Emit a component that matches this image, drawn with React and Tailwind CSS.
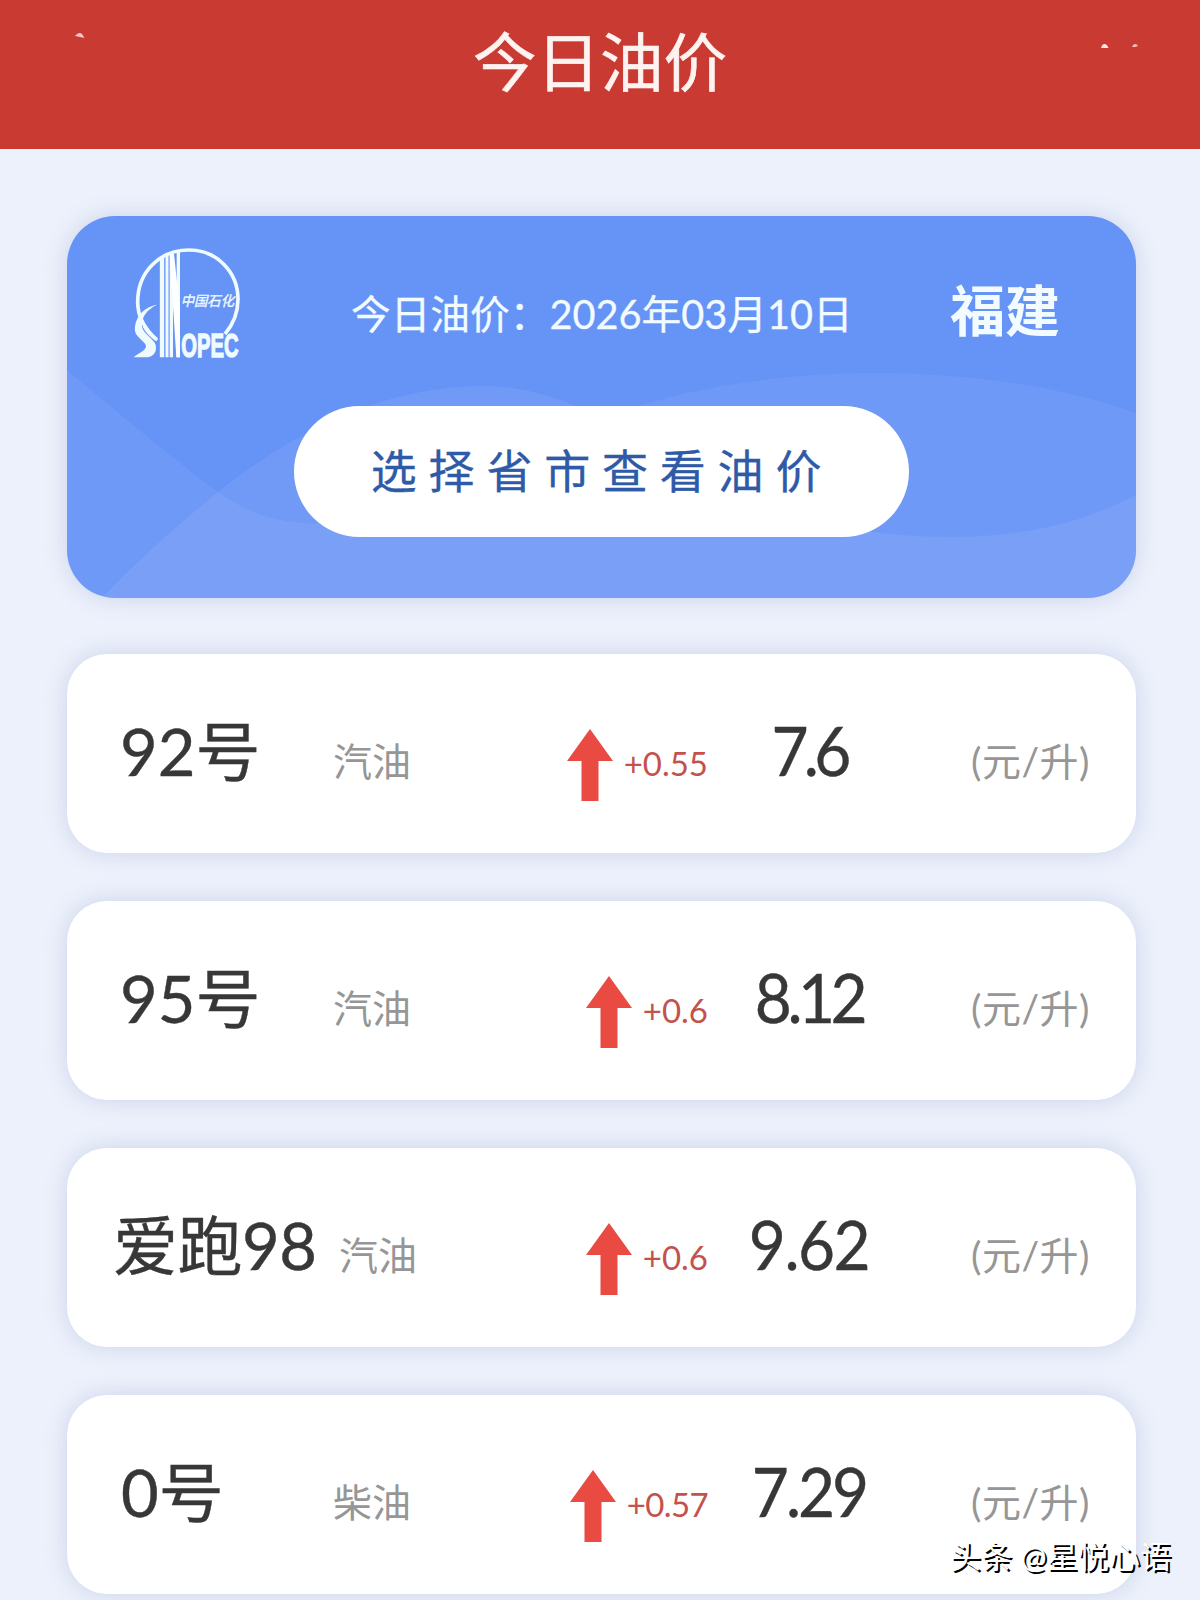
const prices = [
  { name: '92号', type: '汽油', change: '+0.55', price: '7.6', pad: 'pl-[53px]', nameStyle: 'w-[213px]', priceStyle: 'tracking-[-5px]' },
  { name: '95号', type: '汽油', change: '+0.6', price: '8.12', pad: 'pl-[53px]', nameStyle: 'w-[213px]', priceStyle: 'tracking-[-4.8px]' },
  { name: '爱跑98', type: '汽油', change: '+0.6', price: '9.62', pad: 'pl-[46px]', nameStyle: 'w-[226px] tracking-[-0.5px]', priceStyle: 'tracking-[-1.6px]' },
  { name: '0号', type: '柴油', change: '+0.57', price: '7.29', pad: 'pl-[54px]', nameStyle: 'w-[212px]', priceStyle: 'tracking-[-3.2px]', changeStyle: 'tracking-[-0.6px]' },
];

const SinopecLogo = () => (
  <svg className="w-[108px] h-[120px] shrink-0 overflow-visible" viewBox="70 51 324 360" fill="none">
    {/* Ring */}
    <path d="M140 328C104 296 84 262 84 216C84 126 150 60 238 60C322 60 385 126 385 208C385 252 370 284 346 312" stroke="#f0fbff" strokeWidth="11" />
    {/* Swoosh */}
    <path d="M142 224C98 232 74 266 76 302C78 322 108 334 109 348C109 362 90 366 72 382H114C134 378 142 364 138 344C134 328 100 310 97 290C95 262 110 240 142 224Z" fill="#f0fbff" />
    <path d="M103 288C112 306 124 318 143 330" stroke="#f0fbff" strokeWidth="9" />
    {/* Derrick bars */}
    <path d="M157 84V382" stroke="#f0fbff" strokeWidth="13" />
    <path d="M172 76V382" stroke="#f0fbff" strokeWidth="9" />
    <path d="M185 70V382M206 66V382" stroke="#f0fbff" strokeWidth="10" />
    <path d="M180 72H193L211 240V382H200Z" fill="#fff" />
    <text x="213" y="227" textLength="160" lengthAdjust="spacingAndGlyphs" fill="#f0fbff" stroke="#f0fbff" strokeWidth="1" fontSize="42" fontStyle="italic" fontFamily="Noto Sans CJK SC, sans-serif">中国石化</text>
    <text x="215" y="380" textLength="172" lengthAdjust="spacingAndGlyphs" fill="#f0fbff" stroke="#f0fbff" strokeWidth="4" fontSize="102" fontWeight="700" fontFamily="Liberation Sans Narrow, Liberation Sans, sans-serif">OPEC</text>
  </svg>
);

const UpArrow = () => (
  <svg className="w-[46px] h-[72px] shrink-0" viewBox="0 0 46 72">
    <path d="M23 0L46 32H31.5V72H14.5V32H0Z" fill="#e94b43" />
  </svg>
);

const PriceRow = ({ item }) => (
  <div className={`flex items-baseline h-[199px] pt-[51px] rounded-[40px] bg-white shadow-[0_0_22px_rgba(100,125,175,0.25)] text-[#373737] ${item.pad}`}>
    <div className={`shrink-0 text-[65px] leading-[90px] whitespace-nowrap [-webkit-text-stroke:0.4px_#373737] ${item.nameStyle}`}>{item.name}</div>
    <div className="text-[39px] text-[#969696]">{item.type}</div>
    <div className="ml-auto self-start mt-[24px]">
      <UpArrow />
    </div>
    <div className={`ml-[11px] text-[33px] text-[#c4524c] ${item.changeStyle || ''}`}>{item.change}</div>
    <div className={`ml-[21px] w-[160px] text-center text-[68px] leading-[90px] whitespace-nowrap scale-x-[0.94] [-webkit-text-stroke:0.4px_#373737] ${item.priceStyle}`}>
      {item.price}
    </div>
    <div className="ml-[82px] w-[165px] text-[39px] tracking-[0.5px] text-[#969696] whitespace-nowrap">(元/升)</div>
  </div>
);

const App = () => {
  return (
    <div className="relative w-[1200px] h-[1600px] overflow-hidden bg-[#edf1fc] font-['Lato','Noto_Sans_CJK_SC',sans-serif]">
      {/* Title bar */}
      <header className="relative h-[149px] bg-[#c93a32] flex justify-center">
        <h1 className="pt-[14px] text-[63.5px] leading-[96px] text-[#fff3f1] [-webkit-text-stroke:0.6px_#fff3f1]">今日油价</h1>
        <svg className="absolute left-[74px] top-[31px] w-[12px] h-[8px]" viewBox="0 0 12 8">
          <path d="M1 5Q5 0 8 3L10.500 7L6 6Z" fill="#f6c9c5" />
        </svg>
        <svg className="absolute left-[1100px] top-[42px] w-[40px] h-[8px]" viewBox="0 0 40 8">
          <path d="M1 6Q2 2 4.500 2Q7 2 8.500 6Z" fill="#fde4e2" />
          <path d="M32 5Q33 2 35 2Q37 2 38 4L35 5Z" fill="#f3bcb7" />
        </svg>
      </header>

      <main className="pl-[67px] pr-[64px] pt-[67px]">
        {/* Province card */}
        <section className="relative h-[382px] rounded-[48px] overflow-hidden bg-[#6693f6] shadow-[0_0_22px_rgba(100,125,175,0.25)]">
          <svg className="absolute inset-0 w-full h-full" viewBox="0 0 1069 382" preserveAspectRatio="none">
            <path d="M0 154C55 200 105 242 151 276C185 300 215 308 260 308C400 308 480 157 812 157C915 157 1010 175 1069 197V382H0Z" fill="#fff" fillOpacity="0.06" />
            <path d="M35 382C72 343 112 308 151 276C225 217 316 170 415 170C570 170 620 321 885 321C960 321 1020 305 1069 279V382Z" fill="#fff" fillOpacity="0.07" />
          </svg>
          <div className="relative flex items-start h-[190px] pl-[66px] pt-[31px] text-[#f2fbff]">
            <SinopecLogo />
            <p className="ml-[110px] mt-[37px] text-[39.7px] leading-[60px] whitespace-nowrap [-webkit-text-stroke:0.3px_#f2fbff]">今日油价：2026年03月10日</p>
            <p className="ml-auto mr-[76px] mt-[25px] text-[55px] leading-[76px] font-bold">福建</p>
          </div>
          <button className="relative block mx-auto w-[615px] h-[131px] rounded-full bg-white pb-[3px] pl-[1px] text-[46px] tracking-[11.8px] text-[#2e5aa8] [-webkit-text-stroke:0.3px_#2e5aa8]">
            选择省市查看油价
          </button>
        </section>

        {/* Prices */}
        <div className="mt-[56px] flex flex-col gap-[48px]">
          {prices.map((item) => (
            <PriceRow key={item.name} item={item} />
          ))}
        </div>
      </main>

      <div className="absolute left-[950px] top-[1533px] text-[31px] leading-[46px] tracking-[0.2px] text-white whitespace-nowrap [text-shadow:2px_2px_0_#000]">
        头条 @星悦心语
      </div>
    </div>
  );
};

export default App;
